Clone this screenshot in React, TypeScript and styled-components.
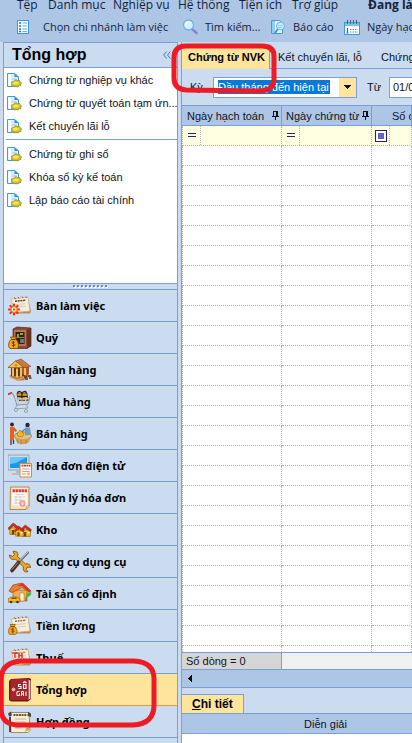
import React from "react";
import styled, { createGlobalStyle, css } from "styled-components";

const c = {
  bar: "#adc6e6",
  panel: "#cbdcf1",
  line: "#7b9fd0",
  yellow: "#ffe49c",
  orange: "#f0953f",
  dot: "#b4b4b4",
  red: "#ed1c24",
};

const Global = createGlobalStyle`
  *, *::before, *::after { box-sizing: border-box; }
  body { margin: 0; background: ${c.panel}; color: #10141c; font: 11px/16px "Liberation Sans", Arial, sans-serif; }
  button, input { font: inherit; color: inherit; padding: 0; margin: 0; border: 0; background: none; border-radius: 0; outline: none; }
  button { cursor: pointer; text-align: left; white-space: nowrap; }
  svg { display: block; flex: none; }
`;

const Shell = styled.div`
  position: relative;
  display: flex;
  flex-direction: column;
  height: 100vh;
  overflow: hidden;
`;

/* ---- menu and toolbar ---- */
const TopBar = styled.header`
  flex: none;
  background: ${c.bar};
  font-family: "Open Sans", "Noto Sans", sans-serif;
  font-size: 12px;
  color: #14233c;
  overflow: hidden;
`;
const MenuRow = styled.nav`
  display: grid;
  grid-template-columns: 31px 65px 65px 61px 53px 76px 1fr;
  grid-template-rows: 14px;
  height: 14px;
  padding-left: 17px;
  align-items: end;
`;
const MenuItem = styled.button`
  height: 18px;
  line-height: 18px;
`;
const MenuTitle = styled.strong`
  height: 18px;
  line-height: 18px;
  white-space: nowrap;
`;
const ToolRow = styled.div`
  display: grid;
  grid-template-columns: 166px 88px 74px 1fr;
  height: 28px;
  padding: 0 0 2px 16px;
  align-items: center;
  font-size: 11px;
`;
const ToolButton = styled.button<{ $gap: number }>`
  display: flex;
  align-items: center;
  gap: ${(p) => p.$gap}px;
`;

/* ---- page body ---- */
const Body = styled.div`
  flex: 1;
  min-height: 0;
  display: grid;
  grid-template-columns: 175px minmax(0, 1fr);
  column-gap: 3px;
  padding-left: 3px;
`;
const Sidebar = styled.aside`
  display: flex;
  flex-direction: column;
  min-height: 0;
  border: 1px solid ${c.line};
  border-bottom: 0;
`;
const SideHead = styled.div`
  flex: none;
  display: flex;
  align-items: center;
  justify-content: space-between;
  height: 25px;
  padding: 0 6px 0 8px;
  border-bottom: 1px solid ${c.line};
`;
const SideTitle = styled.h1`
  margin: 0;
  font-size: 16px;
  line-height: 24px;
  color: #000;
`;
const Tasks = styled.div`
  flex: 1;
  min-height: 0;
  overflow: hidden;
  background: #fff;
  border-bottom: 1px solid ${c.line};
`;
const TaskGroup = styled.div`
  display: flex;
  flex-direction: column;
  padding-bottom: 2px;
  & + & {
    margin-left: 2px;
    border-top: 1px solid ${c.line};
    padding-top: 2px;
  }
  & + & > button { padding-left: 1px; }
`;
const Task = styled.button`
  display: flex;
  align-items: center;
  gap: 7px;
  height: 23px;
  padding-left: 3px;
  white-space: nowrap;
`;
const Grip = styled.div`
  flex: none;
  display: flex;
  justify-content: center;
  align-items: center;
  height: 5px;
`;
const NavList = styled.nav`
  flex: none;
  border-top: 1px solid ${c.line};
  padding-bottom: 5px;
`;
const NavItem = styled.button<{ $active?: boolean }>`
  display: flex;
  align-items: center;
  gap: 4px;
  width: 100%;
  height: 32px;
  padding-left: 4px;
  border-bottom: 1px solid ${c.line};
  font: bold 11px/16px "Noto Sans", "Open Sans", sans-serif;
  color: #000;
  ${(p) => p.$active && css`
    background: ${c.yellow};
    border-bottom-color: ${c.orange};
  `}
`;

const Main = styled.main`
  display: flex;
  flex-direction: column;
  min-width: 0;
  min-height: 0;
  border-left: 1px solid ${c.line};
  overflow: hidden;
`;
const Tabs = styled.div`
  flex: none;
  display: flex;
  height: 27px;
  padding-top: 3px;
  border-bottom: 1px solid ${c.line};
`;
const Tab = styled.button<{ $active?: boolean; $w: number }>`
  flex: none;
  min-width: ${(p) => p.$w}px;
  height: 24px;
  padding: 0 0 1px 8px;
  ${(p) => p.$active && css`
    padding-left: 6px;
    font-weight: bold;
    color: #000;
    background: ${c.yellow};
    border-right: 1px solid ${c.line};
  `}
`;
const Filters = styled.form`
  flex: none;
  display: flex;
  align-items: center;
  height: 36px;
  padding-left: 8px;
`;
const FieldLabel = styled.label<{ $w: number }>`
  flex: none;
  width: ${(p) => p.$w}px;
`;
const Combo = styled.div`
  flex: none;
  display: flex;
  align-items: center;
  width: 144px;
  height: 21px;
  margin-right: 10px;
  padding-left: 4px;
  border: 1px solid ${c.line};
  background: #fff;
`;
const ComboInput = styled.input`
  width: 112px;
  height: 14px;
  background: #0a78d6;
  color: #fff;
  line-height: 14px;
`;
const ComboArrow = styled.button`
  display: grid;
  place-items: center;
  width: 17px;
  height: 19px;
  margin-left: auto;
  background: ${c.yellow};
`;
const DateInput = styled.input`
  flex: 1 0 90px;
  max-width: 100px;
  height: 21px;
  padding-left: 3px;
  border: 1px solid ${c.line};
  background: #fff;
`;

const GridArea = styled.div`
  flex: 1 1 0;
  min-height: 0;
  overflow: hidden;
  background: #fff;
  border-top: 1px solid ${c.line};
`;
const Table = styled.table`
  width: 100%;
  table-layout: fixed;
  border-collapse: separate;
  border-spacing: 0;
`;
const Col = styled.col<{ $w?: number }>`
  width: ${(p) => (p.$w ? p.$w + "px" : "auto")};
`;
const Th = styled.th<{ $left: number }>`
  height: 20px;
  padding: 0 0 0 ${(p) => p.$left}px;
  background: ${c.bar};
  border-right: 1px solid ${c.line};
  border-bottom: 1px solid ${c.line};
  font-weight: normal;
  text-align: left;
  white-space: nowrap;
  overflow: hidden;
`;
const ThInner = styled.div`
  display: flex;
  align-items: center;
  justify-content: space-between;
  padding-right: 2px;
`;
const Td = styled.td<{ $filter?: boolean }>`
  height: 20px;
  padding: 0;
  border-right: 1px dotted ${c.dot};
  border-bottom: 1px dotted ${c.dot};
  &:first-child { border-left: 1px dotted ${c.dot}; }
  ${(p) => p.$filter && css`background: #ffffe1;`}
`;
const Operator = styled.button`
  display: grid;
  place-items: center;
  width: 18px;
  height: 19px;
  border-right: 1px dotted ${c.dot};
`;
const Summary = styled.div`
  flex: none;
  display: flex;
  height: 18px;
  background: #f0f0f0;
  border-top: 1px solid ${c.line};
  border-bottom: 1px solid ${c.line};
`;
const Count = styled.div`
  width: 100px;
  padding-left: 4px;
  background: #d5d5d5;
  border-right: 1px solid ${c.line};
  line-height: 16px;
`;
const Scroll = styled.div`
  flex: none;
  display: flex;
  align-items: center;
  height: 18px;
  background: ${c.bar};
  border-bottom: 1px solid ${c.line};
`;
const ScrollButton = styled.button`
  display: grid;
  place-items: center;
  width: 16px;
  height: 16px;
`;
const DetailTabs = styled.div`
  flex: none;
  display: flex;
  height: 26px;
  padding-top: 6px;
  border-bottom: 1px solid ${c.line};
`;
const DetailTab = styled.button`
  min-width: 60px;
  padding: 0 10px;
  font-size: 12px;
  font-weight: bold;
  color: #000;
  background: ${c.yellow};
  border: 1px solid ${c.line};
  border-width: 1px 1px 0 0;
  &::first-letter { text-decoration: underline; }
`;
const DetailArea = styled.div`
  flex: none;
  height: 29px;
  background: #fff;
  overflow: hidden;
`;
const DetailTh = styled(Th)`
  text-align: center;
`;

const Marks = styled.svg`
  position: absolute;
  top: 0;
  left: 0;
  pointer-events: none;
`;

/* ---- small drawings ---- */
const Pin = () => (
  <svg width="7" height="9" viewBox="0 0 7 9" shapeRendering="crispEdges">
    <path d="M1 0h5v1H1zM1 1h1v4H1zM4 1h2v4H4zM0 5h7v1H0zM3 6h1v3H3z" fill="#111" />
  </svg>
);
const Equals = () => (
  <svg width="8" height="5" viewBox="0 0 8 5" shapeRendering="crispEdges">
    <path d="M0 0h8v1H0zM0 3h8v1H0z" fill="#24246e" />
  </svg>
);
const BoxMark = () => (
  <svg width="12" height="12" viewBox="0 0 12 12" shapeRendering="crispEdges">
    <path d="M.5.5h11v11H.5z" fill="#fff" stroke="#24246e" />
    <path d="M3 3h6v6H3z" fill="#6464c8" />
  </svg>
);
const BranchIcon = () => (
  <svg width="14" height="16" viewBox="0 0 14 16">
    <rect x="1.500" y="1.500" width="11" height="13" fill="#f4faff" stroke="#3b98dc" />
    <path d="M3 4h2M3 7h2M3 10h2M3 12.500h2" stroke="#1977c9" strokeWidth="1.500" />
    <path d="M6.500 4H11M6.500 7H11M6.500 10H11M6.500 12.500H11" stroke="#67b2e6" />
  </svg>
);
const SearchIcon = () => (
  <svg width="16" height="16" viewBox="0 0 16 16">
    <path d="M9.500 9.500l5 4.500" stroke="#8b84cf" strokeWidth="2.600" strokeLinecap="round" />
    <circle cx="6.500" cy="6" r="5" fill="#d8f1ff" stroke="#6bb4e8" strokeWidth="1.300" />
    <path d="M3.500 6a3 3 0 013-3" stroke="#fff" strokeWidth="1.300" fill="none" />
  </svg>
);
const ReportIcon = () => (
  <svg width="16" height="16" viewBox="0 0 16 16">
    <path d="M1.500 1.500h8l3 3v10h-11z" fill="#eef8ff" stroke="#3e9be0" />
    <path d="M2 2h3v12H2z" fill="#93cdf3" />
    <path d="M8 10l-3 4" stroke="#3f8ecf" strokeWidth="2" />
    <circle cx="10.500" cy="7" r="4" fill="#c9eafc" stroke="#64aee3" />
    <path d="M8.500 6.500h4M8.500 8.500h3" stroke="#8fc8ef" />
  </svg>
);
const CalendarIcon = () => (
  <svg width="16" height="15" viewBox="0 0 16 15">
    <rect x=".5" y="2.500" width="15" height="12" fill="#fff" stroke="#3b9be0" />
    <path d="M1 3h14v3H1z" fill="#7cc2f1" />
    <path d="M3.500 0v4M6.500 0v4M9.500 0v4M12.500 0v4" stroke="#55606f" />
    <path d="M3.500 8v5M2.500 13h2" stroke="#1c6bb8" />
    <path d="M6 9.500h8M6 12h8" stroke="#4d8dcc" strokeDasharray="1.500 1" />
  </svg>
);
const Chevrons = () => (
  <svg width="8" height="8" viewBox="0 0 8 8">
    <path d="M3.500.5L.7 4l2.800 3.500M7.300.5L4.500 4l2.800 3.500" fill="none" stroke="#4a77bd" />
  </svg>
);
const TaskIcon = () => (
  <svg width="15" height="16" viewBox="0 0 15 16">
    <path d="M.5 1.500h7.500l3.500 3.500v9.500H.5z" fill="#d9eefc" stroke="#3e9be0" />
    <path d="M1.500 2.500h2.500v11H1.500z" fill="#fff" />
    <path d="M7.500 1.500V5h4z" fill="#2e8ad4" />
    <path d="M5 7h4" stroke="#9ccdf0" />
    <path d="M9 7.500l1.500 1 2-.3.500 1.500 1.500 1-.7 1.300.2 1.500-2 .3-1.500 1.200-1.500-.6-1.700.6-1-1.200-2-.5.500-1.500-.5-1.600 2-.6z" fill="#d3bf2c" stroke="#9a8514" strokeWidth=".7" />
    <ellipse cx="8.800" cy="11" rx="3" ry="1.600" fill="#f0e460" />
  </svg>
);
const GripDots = () => (
  <svg width="36" height="3" viewBox="0 0 36 3" shapeRendering="crispEdges">
    {Array.from({ length: 9 }, (_, i) => (
      <g key={i}>
        <rect x={i * 4 + 1} y="1" width="2" height="2" fill="#fff" />
        <rect x={i * 4} y="0" width="2" height="2" fill="#5f88c6" />
      </g>
    ))}
  </svg>
);

/* ---- module icons, drawn on a 24 x 24 board ---- */
const Sheet = ({ ink = "#77736a" }: { ink?: string }) => (
  <>
    <path d="M20 4l3 13-1 2.500H6L4 17z" fill="#b98b57" />
    <path d="M3 5l17-2 2 14-15 1.500z" fill="#f7edda" stroke="#cfb083" strokeWidth=".8" />
    <path d="M6 3.500l2 1.500M10 3l1 1.500M14 2.500l1 1.500M18 2.500l.5 1.500" stroke="#8d5f34" />
    <path d="M7 7.200l11-1" stroke={ink} strokeWidth="1.600" strokeDasharray="2 .7" />
    <path d="M8 10.500l10-.8M9 13l9-.7" stroke="#d4c4aa" strokeWidth=".8" />
  </>
);
const Bag = () => (
  <>
    <path d="M3.500 13l-1-2h6l-1 2c3 2 4 8 1.500 9.500H2C-.6 21 .7 15 3.500 13z" fill="#efad18" stroke="#865307" strokeWidth=".9" />
    <path d="M3.500 13.500h4" stroke="#7c3d10" strokeWidth="1.200" />
    <path d="M7 16.300c-3-1.300-4.300.8-1.500 1.600s1.300 3-1.500 1.500M5.500 15.300v6" stroke="#a52810" fill="none" />
  </>
);
const House = ({ x, y, s = 1 }: { x: number; y: number; s?: number }) => (
  <g transform={`translate(${x} ${y}) scale(${s})`}>
    <path d="M2 5h9v7H2z" fill="#f0b92d" stroke="#9a5d0f" strokeWidth=".7" />
    <path d="M0 5.500L5.500 0l6.500 5-1 2L5.500 3 1 7z" fill="#d42a1d" stroke="#77200f" strokeWidth=".6" />
    <path d="M4 7.500h2.500V12H4z" fill="#70400f" />
    <path d="M8 7h2v2H8z" fill="#fff0a0" />
  </g>
);

const art: Record<string, React.ReactNode> = {
  desk: (
    <>
      <Sheet ink="#4a4742" />
      <g stroke="#e2321d" strokeWidth="2.200" strokeLinecap="round">
        <path d="M6 10.500v10M1 15.500h10M2.500 12l7 7M9.500 12l-7 7" />
      </g>
      <circle cx="6" cy="15.500" r="2.800" fill="#fff1c7" stroke="#f69020" />
      <circle cx="6" cy="15.500" r="1.100" fill="#e0401c" />
    </>
  ),
  safe: (
    <>
      <path d="M5 3l4-2 14 1v18l-4 2.500H5z" fill="#8d4a33" stroke="#552614" strokeWidth=".7" />
      <path d="M19 4l4-2v18l-4 2.500z" fill="#6b301e" />
      <path d="M6 4h12v16H6z" fill="#b8755a" />
      <path d="M7.500 6h9v12h-9z" fill="#292419" />
      <path d="M9 8h2v3H9zM12 7h3v2h-3z" fill="#9ca62c" />
      <path d="M8 11.500h8" stroke="#b8755a" />
      <path d="M12 13h4v4h-4z" fill="#6d7778" />
      <Bag />
    </>
  ),
  bank: (
    <>
      <path d="M1 18l4-2h14l4 2-8 4.500H9z" fill="#bc7c45" />
      <path d="M3 10h16v8H3z" fill="#6b3510" />
      <path d="M13 4l8 5v7l-3 2.500-4-3z" fill="#a9592c" />
      <path d="M5 10v8M9 10.500v9M13 10v8.500M17 10v7" stroke="#f1ca68" strokeWidth="1.900" />
      <path d="M0 9.500L7.500 3 16 9.500z" fill="#f4c44e" stroke="#96550f" strokeWidth=".8" />
      <path d="M7.500 3L13 1l10 7.500-7 1z" fill="#c87845" stroke="#8f4a20" strokeWidth=".6" />
      <circle cx="8" cy="7.300" r="1.400" fill="#a6a019" />
      <path d="M2 19.500l7 2.500 7-2.500" stroke="#e1aa70" fill="none" />
      <path d="M16 19h3M20 18h3M17 21h3M21 20h2.500" stroke="#5d3318" strokeWidth="1.600" />
    </>
  ),
  cart: (
    <>
      <path d="M0 4.500L4 2.500" stroke="#bb3d24" strokeWidth="1.800" />
      <path d="M4 3l2 3 3 9 11-1 2-8" fill="none" stroke="#8e98a5" strokeWidth="1.200" />
      <path d="M9 3h10l1 7.500H10z" fill="#e7a11c" stroke="#593510" strokeWidth=".8" />
      <path d="M14 3v8M9.500 6.500h10" stroke="#2c2217" strokeWidth="1.300" />
      <path d="M14 3c-3-3-5-1-4 .5M14 3c3-3 5-1 4 .5" fill="none" stroke="#2c2217" strokeWidth="1.300" />
      <path d="M6 9l15-.5M7.500 12l13-.7M10 7l1 7.500M14 8v6.500M18 7l-.8 7" stroke="#c7ced6" />
      <path d="M9 15l-2 4 13-1-2-4" fill="none" stroke="#9aa3ad" />
      <circle cx="8" cy="20" r="1.500" fill="#eee" stroke="#8e98a5" />
      <circle cx="18" cy="21" r="1.500" fill="#eee" stroke="#8e98a5" />
    </>
  ),
  sale: (
    <>
      <ellipse cx="15" cy="14" rx="8.500" ry="4" fill="#e7c17a" stroke="#99692d" strokeWidth=".7" />
      <path d="M6.500 14.500c1 3 2 5 3 6.500 4 2 9 1.500 11.500-1l2.300-6c-4 4-12 4.500-16.800.5z" fill="#cf9f5c" />
      <path d="M9 17.500l1 4M13 18.500v4M18 18v3.500" stroke="#a5743a" strokeWidth=".7" />
      <circle cx="4" cy="2.500" r="2" fill="#40261a" />
      <path d="M2 5h4l3 3.500-1 1.500-2-1v9H2z" fill="#e06322" />
      <path d="M3 18v5M5.500 18v4" stroke="#543331" strokeWidth="1.300" />
      <circle cx="19.500" cy="3" r="2.200" fill="#2f2729" />
      <path d="M17 5.500h5l1 7-6 1z" fill="#6f9cc0" />
      <path d="M17.500 7l-4 3" stroke="#5583a8" strokeWidth="1.500" />
      <path d="M9 12l3-4 4 4-2 3-4-.5z" fill="#f2b91e" stroke="#986315" strokeWidth=".6" />
    </>
  ),
  monitor: (
    <>
      <path d="M0 1h21v15H0z" fill="#d7dadd" stroke="#8b9299" strokeWidth=".8" />
      <path d="M2 3h17v11H2z" fill="#1798ee" />
      <path d="M2 3h17L8 9l-6 1z" fill="#69c5fb" />
      <path d="M8 16h5v3h3v2H4v-2h4z" fill="#b7bdc3" />
      <path d="M12 9.500h11.500V23H12z" fill="#fff6ea" stroke="#d08c48" />
      <path d="M13.500 11.700h9" stroke="#e0342a" strokeWidth="1.700" strokeDasharray="2 .5" />
      <path d="M14 15h7.500M14 17.500h7.500M14 20h4" stroke="#b3aca5" />
      <circle cx="20.500" cy="20" r="1.400" fill="#f4a1a1" />
    </>
  ),
  invoice: (
    <>
      <path d="M2.500 1H21v19l-3 3.500H2z" fill="#f6e0bf" stroke="#b97d43" strokeWidth=".9" />
      <path d="M4 2.500h15.500v17H4z" fill="#fffaf4" />
      <path d="M4.500 4.700h15" stroke="#e2352e" strokeWidth="3" strokeDasharray="2.400 .6" />
      <path d="M8 8.500h8M6 11h12M6 14h12M6 17h7M8 10v8M12 10v8" stroke="#c4bebb" strokeWidth=".7" />
      <circle cx="14.500" cy="17.500" r="2.700" fill="#f8c2c2" stroke="#e0605c" strokeWidth=".7" />
      <path d="M18 23.500l.5-3.500 3-.5z" fill="#fff2db" stroke="#b97d43" strokeWidth=".5" />
    </>
  ),
  store: (
    <>
      <House x={0} y={5} s={0.95} />
      <House x={12} y={7} s={0.95} />
      <House x={6} y={8} s={0.85} />
    </>
  ),
  tools: (
    <>
      <path d="M5 1.500l1.500 3-2 2-3-1.500c0 4 3 5.500 6 4l8 8c-1 3 1 6 4.500 4.500l-2-2 1.500-2.500 3 .5c0-3-2.500-4.500-5-3.500L9.500 6.500C11 3 8.500.5 5 1.500z" fill="#f0a81e" stroke="#6e4208" strokeWidth=".8" />
      <path d="M20.500 2L10 13" stroke="#5f6268" strokeWidth="2.200" />
      <path d="M20 2L10.500 12" stroke="#e5e8ec" strokeWidth=".8" />
      <path d="M10.500 12.500L4 20.500" stroke="#513225" strokeWidth="3.600" strokeLinecap="round" />
      <path d="M10 12.500l-6 7" stroke="#aa8069" strokeWidth="1" />
    </>
  ),
  asset: (
    <>
      <path d="M5 8h14v11H5z" fill="#f0ad58" stroke="#a65f22" strokeWidth=".7" />
      <path d="M1 9l4-6 9-2 9 8-1 1.500-8-5L4 10.500z" fill="#e98131" stroke="#a13d16" strokeWidth=".7" />
      <path d="M9 4l6-3 8 8-2 1-7-6z" fill="#d83421" />
      <path d="M12 11h4v8h-4z" fill="#fff2d1" stroke="#a86829" strokeWidth=".5" />
      <path d="M18 13c2-4 4-3 5.500-2-1 3-2 4-5.500 4z" fill="#55b536" />
      <path d="M18 15v4" stroke="#477b25" />
      <path d="M0 17l3-2h6l3 2v3H0z" fill="#f0bd20" stroke="#8d5e0d" strokeWidth=".7" />
      <path d="M4 15.500h4l1 1.500H3z" fill="#854e13" />
      <circle cx="3" cy="20" r="1.300" fill="#4d3511" />
      <circle cx="9.500" cy="20" r="1.300" fill="#4d3511" />
    </>
  ),
  salary: (<><Sheet ink="#7d7b76" /><g transform="translate(0 1) scale(.86)"><Bag /></g></>),
  tax: (
    <>
      <Sheet ink="#bd8b76" />
      <path d="M4 7h6M7 7v5M11 7v5M14 7v5M11 9.500h3" stroke="#e3362e" strokeWidth="1.500" />
      <path d="M2 15.500l5 3 9-1" stroke="#e8ab69" strokeWidth="1.500" fill="none" />
    </>
  ),
  ledger: (
    <>
      <path d="M3 1l18-1 2 1v20l-3 2.500H3L1 22V3z" fill="#701519" />
      <path d="M2.500 1.500L20 .5v21.500H2z" fill="#a5242a" />
      <path d="M20.500 1.500l2 1v18l-2 1.500z" fill="#e0c3b8" />
      <path d="M3.500 11.500h4M5.500 9.500v4M4 10l3 3M7 10l-3 3" stroke="#f3c9c0" strokeWidth=".8" />
      <path d="M13 6.500h-2.500v2H13v2h-2.500M15.500 6.500H18v4h-2.500zM15 5l1.700-1.500L18.500 5" fill="none" stroke="#fff" strokeWidth="1.100" />
      <path d="M11.500 13.500H9v4h2.500v-2M13.500 18v-4.500h2V18M13.500 16h2M18 13.500V18" fill="none" stroke="#fff" />
    </>
  ),
  contract: (
    <>
      <path d="M2 2.500h19l1 18-2 2H3z" fill="#f8edd4" stroke="#9c8d70" />
      <path d="M0 3.500l3-2 1 4-3 1zM20 2l3 1.500V7l-3-1z" fill="#4c463c" />
      <path d="M2 7v15" stroke="#34322d" strokeWidth="1.700" />
      <path d="M5.500 5h14" stroke="#5c544a" strokeWidth="2" strokeDasharray="2 .7" />
      <path d="M7 9h11M7 12h11M7 15h10M7 18h6" stroke="#c3b59a" />
      <path d="M17 22l1-4 4-1.500v3z" fill="#d7a14f" />
    </>
  ),
};

const modules: [string, string][] = [
  ["Bàn làm việc", "desk"],
  ["Quỹ", "safe"],
  ["Ngân hàng", "bank"],
  ["Mua hàng", "cart"],
  ["Bán hàng", "sale"],
  ["Hóa đơn điện tử", "monitor"],
  ["Quản lý hóa đơn", "invoice"],
  ["Kho", "store"],
  ["Công cụ dụng cụ", "tools"],
  ["Tài sản cố định", "asset"],
  ["Tiền lương", "salary"],
  ["Thuế", "tax"],
  ["Tổng hợp", "ledger"],
  ["Hợp đồng", "contract"],
];
const taskGroups = [
  ["Chứng từ nghiệp vụ khác", "Chứng từ quyết toán tạm ứn...", "Kết chuyển lãi lỗ"],
  ["Chứng từ ghi sổ", "Khóa sổ kỳ kế toán", "Lập báo cáo tài chính"],
];
const menu = ["Tệp", "Danh mục", "Nghiệp vụ", "Hệ thống", "Tiện ích", "Trợ giúp"];
const emptyRows = Array.from({ length: 80 }, (_, i) => i);

export default function App() {
  return (
    <Shell>
      <Global />
      <TopBar>
        <MenuRow>
          {menu.map((m) => <MenuItem key={m}>{m}</MenuItem>)}
          <MenuTitle>Đang làm</MenuTitle>
        </MenuRow>
        <ToolRow>
          <ToolButton $gap={13}><BranchIcon />Chọn chi nhánh làm việc</ToolButton>
          <ToolButton $gap={7}><SearchIcon />Tìm kiếm...</ToolButton>
          <ToolButton $gap={7}><ReportIcon />Báo cáo</ToolButton>
          <ToolButton $gap={7}><CalendarIcon />Ngày hạch</ToolButton>
        </ToolRow>
      </TopBar>
      <Body>
        <Sidebar>
          <SideHead>
            <SideTitle>Tổng hợp</SideTitle>
            <button aria-label="Thu gọn"><Chevrons /></button>
          </SideHead>
          <Tasks>
            {taskGroups.map((g) => (
              <TaskGroup key={g[0]}>
                {g.map((t) => <Task key={t}><TaskIcon />{t}</Task>)}
              </TaskGroup>
            ))}
          </Tasks>
          <Grip><GripDots /></Grip>
          <NavList>
            {modules.map(([name, icon]) => (
              <NavItem key={name} $active={icon === "ledger"}>
                <svg width="24" height="24" viewBox="0 0 24 24">{art[icon]}</svg>
                {name}
              </NavItem>
            ))}
          </NavList>
        </Sidebar>
        <Main>
          <Tabs role="tablist">
            <Tab role="tab" aria-selected $active $w={88}>Chứng từ NVK</Tab>
            <Tab role="tab" $w={103}>Kết chuyển lãi, lỗ</Tab>
            <Tab role="tab" $w={90}>Chứng từ ghi sổ</Tab>
          </Tabs>
          <Filters>
            <FieldLabel htmlFor="period" $w={23}>Kỳ</FieldLabel>
            <Combo>
              <ComboInput id="period" role="combobox" aria-expanded={false} defaultValue="Đầu tháng đến hiện tại" />
              <ComboArrow type="button" aria-label="Mở danh sách">
                <svg width="7" height="4" viewBox="0 0 7 4" shapeRendering="crispEdges"><path d="M0 0h7v1H6v1H5v1H4v1H3V3H2V2H1V1H0z" fill="#111" /></svg>
              </ComboArrow>
            </Combo>
            <FieldLabel htmlFor="from" $w={22}>Từ</FieldLabel>
            <DateInput id="from" defaultValue="01/01/2020" />
          </Filters>
          <GridArea>
            <Table>
              <colgroup><Col $w={100} /><Col $w={90} /><Col /></colgroup>
              <thead>
                <tr>
                  <Th $left={5}><ThInner>Ngày hạch toán<Pin /></ThInner></Th>
                  <Th $left={4}><ThInner>Ngày chứng từ<Pin /></ThInner></Th>
                  <Th $left={20}>Số chứng từ</Th>
                </tr>
              </thead>
              <tbody>
                <tr>
                  <Td $filter><Operator aria-label="Bằng"><Equals /></Operator></Td>
                  <Td $filter><Operator aria-label="Bằng"><Equals /></Operator></Td>
                  <Td $filter><Operator aria-label="Chứa"><BoxMark /></Operator></Td>
                </tr>
                {emptyRows.map((r) => <tr key={r}><Td /><Td /><Td /></tr>)}
              </tbody>
            </Table>
          </GridArea>
          <Summary><Count>Số dòng = 0</Count></Summary>
          <Scroll>
            <ScrollButton aria-label="Cuộn trái">
              <svg width="4" height="7" viewBox="0 0 4 7" shapeRendering="crispEdges"><path d="M3 0h1v7H3V6H2V5H1V4H0V3h1V2h1V1h1z" fill="#000" /></svg>
            </ScrollButton>
          </Scroll>
          <DetailTabs role="tablist">
            <DetailTab role="tab" aria-selected>Chi tiết</DetailTab>
          </DetailTabs>
          <DetailArea>
            <Table>
              <colgroup><Col $w={288} /></colgroup>
              <thead><tr><DetailTh $left={0}>Diễn giải</DetailTh></tr></thead>
            </Table>
          </DetailArea>
        </Main>
      </Body>
      <Marks width="280" height="740" viewBox="0 0 280 740" fill="none" stroke={c.red} strokeWidth="5" strokeLinecap="round">
        <path d="M186 46h76q12 0 12 10v23q0 12-15 12l-73-1q-12-1-12-12V58q0-12 12-12z" />
        <path d="M20 661h114q20 1 20 18v26q0 19-21 20H16Q1 724 1 708v-28q0-17 19-19z" />
      </Marks>
    </Shell>
  );
}
